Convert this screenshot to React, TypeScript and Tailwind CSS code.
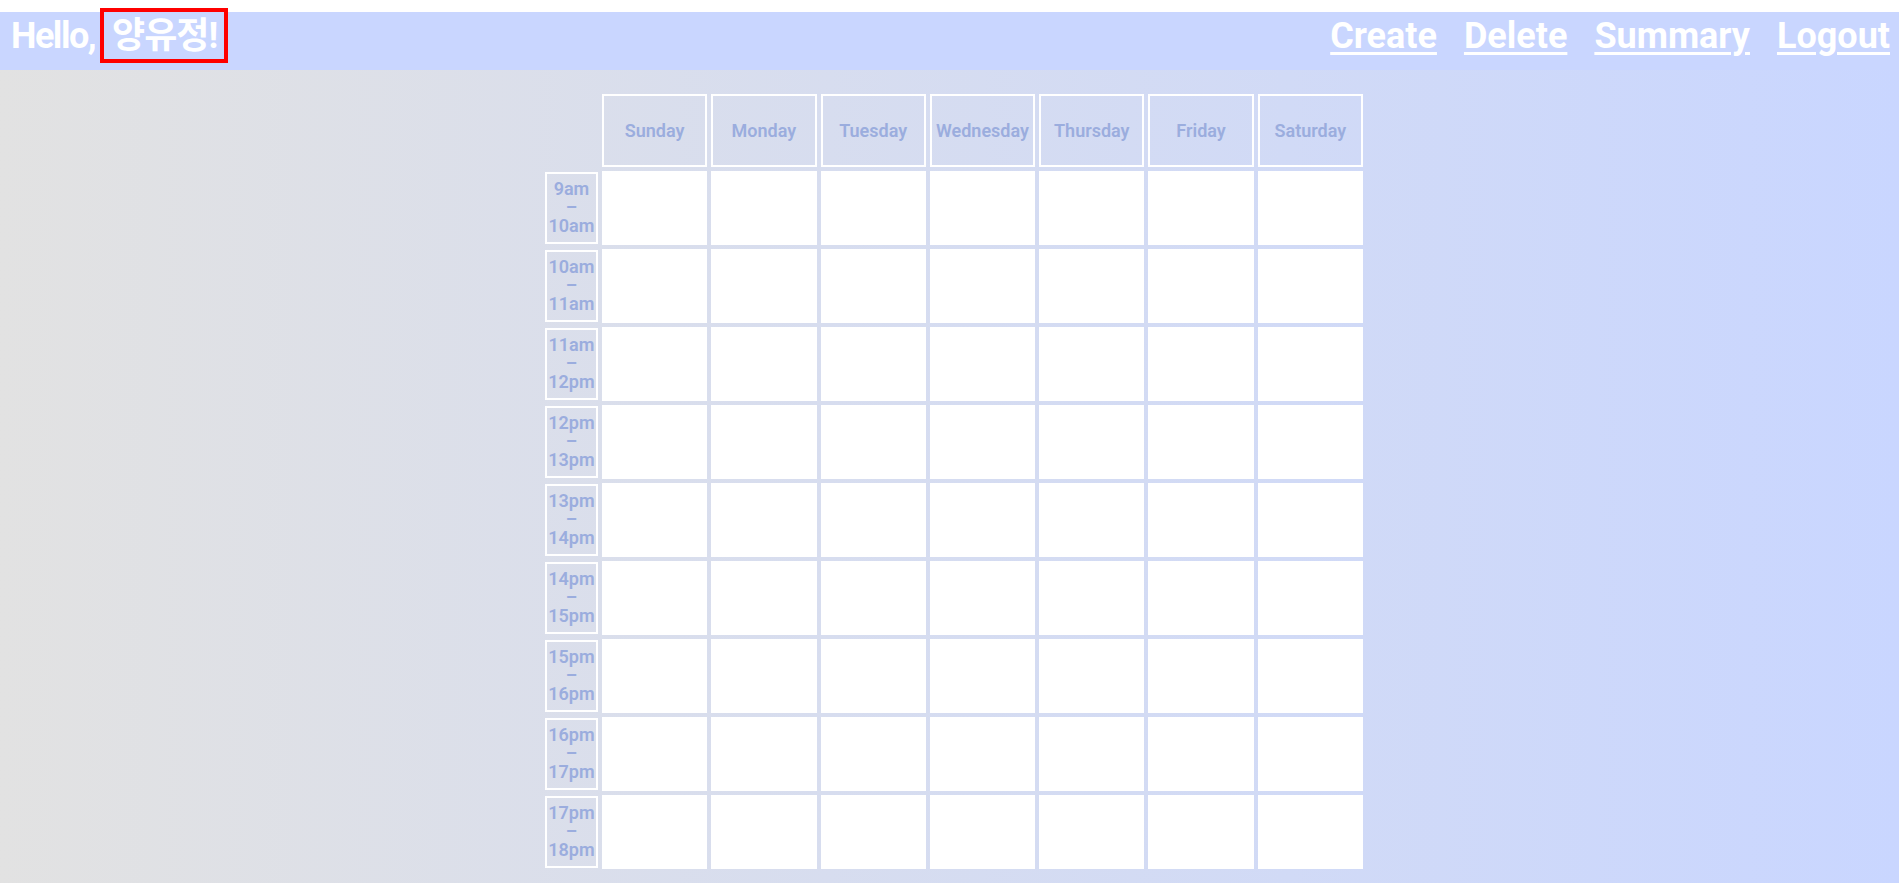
import React from "react";

const days = ["Sunday", "Monday", "Tuesday", "Wednesday", "Thursday", "Friday", "Saturday"];

const slots = [
  ["9am", "10am"],
  ["10am", "11am"],
  ["11am", "12pm"],
  ["12pm", "13pm"],
  ["13pm", "14pm"],
  ["14pm", "15pm"],
  ["15pm", "16pm"],
  ["16pm", "17pm"],
  ["17pm", "18pm"],
];

const links = ["Create", "Delete", "Summary", "Logout"];

export default function App() {
  return (
    <div
      className="min-h-screen flex flex-col bg-white"
      style={{ fontFamily: 'Roboto, "Noto Sans CJK KR", sans-serif' }}
    >
      <div className="h-[12px] bg-white" />

      <header className="h-[58px] bg-[#c9d6ff] flex items-center justify-between pl-[11px] pr-[9px] pb-[10px] text-white font-bold text-[36px] leading-none">
        <div className="flex items-center">
          <span className="tracking-[-1.5px]">Hello,</span>
          <span className="relative ml-[17px] tracking-[-1px]">
            양유정!
            <span className="absolute -left-[12px] -right-[11px] -top-[10px] -bottom-[9px] border-[4px] border-[#ff0000]" />
          </span>
        </div>
        <nav className="flex items-center gap-[27px]">
          {links.map((l) => (
            <a
              key={l}
              href="#"
              className="underline decoration-[3px] underline-offset-[4px]"
            >
              {l}
            </a>
          ))}
        </nav>
      </header>

      <main className="flex-1 bg-linear-to-r from-[#e2e2e2] to-[#c9d6ff] flex justify-center pl-[9px] pt-[24px] pb-[14px]">
        <div className="grid grid-cols-[53px_repeat(7,105.3px)] grid-rows-[73px_repeat(9,74px)] gap-[4px] text-[#9badde] font-semibold text-[18px] self-start">
          <div />
          {days.map((d) => (
            <div key={d} className="border-2 border-white flex items-center justify-center">
              {d}
            </div>
          ))}
          {slots.map(([from, to]) => (
            <React.Fragment key={from}>
              <div className="border-2 border-white my-px flex flex-col items-center justify-center leading-[18.5px]">
                <span>{from}</span>
                <span>–</span>
                <span>{to}</span>
              </div>
              {days.map((d) => (
                <div key={d} className="bg-white" />
              ))}
            </React.Fragment>
          ))}
        </div>
      </main>
    </div>
  );
}
